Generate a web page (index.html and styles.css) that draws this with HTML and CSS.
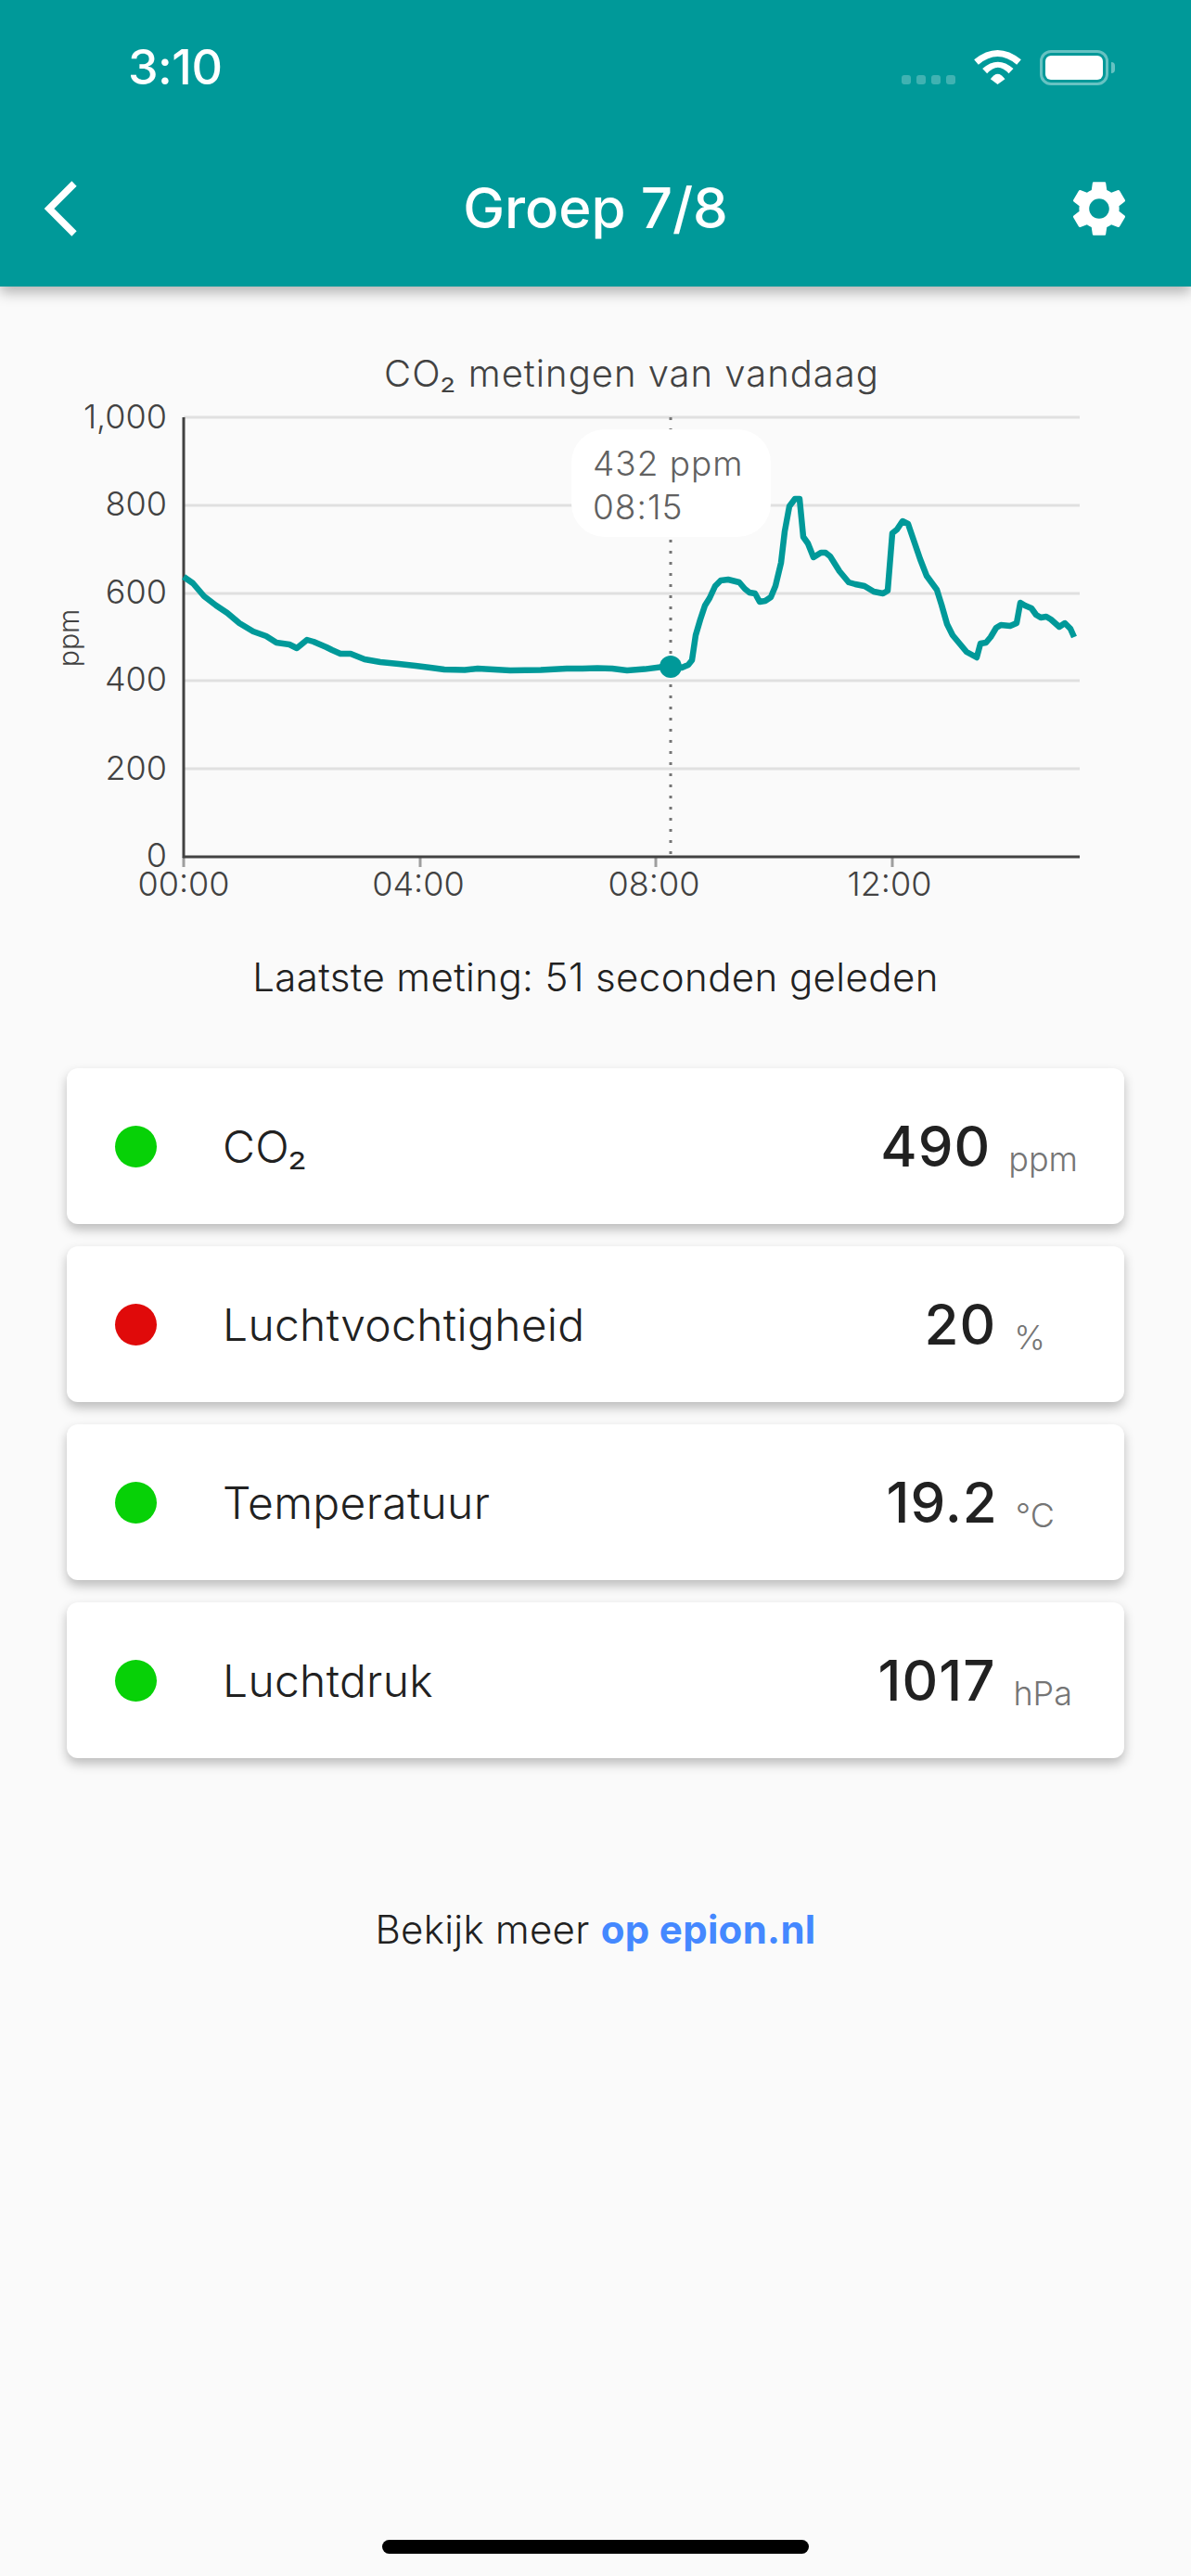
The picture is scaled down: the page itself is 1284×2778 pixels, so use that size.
FILE: index.html
```html
<!DOCTYPE html>
<html lang="nl">
<head>
  <meta charset="UTF-8">
  <meta name="viewport" content="width=device-width, initial-scale=1.0">
  <title>Groep 7/8</title>
  <link rel="stylesheet" href="styles.css">
</head>
<body>
  <div class="page">
    <header class="appbar">
      <div class="statusbar">
        <span class="time">3:10</span>
        <div class="status-icons">
          <div class="signal"><i></i><i></i><i></i><i></i></div>
          <svg class="wifi" viewBox="0 0 152 111">
            <path d="M0 31Q76-31 152 31L138 47Q76-5 14 47Z"/>
            <path d="M27 60Q77 16 127 60L112 76Q77 36 42 76Z"/>
            <path d="M53 94Q76 60 100 94L76 111Z"/>
          </svg>
          <div class="battery">
            <div class="battery-body"><div class="battery-fill"></div></div>
            <div class="battery-nub"></div>
          </div>
        </div>
      </div>
      <nav class="navbar">
        <svg class="back" viewBox="0 0 40 64">
          <polyline points="35,5 8,32 35,59"/>
        </svg>
        <h1>Groep 7/8</h1>
        <svg class="gear" viewBox="0 0 24 24">
          <path d="M19.14 12.94c.04-.3.06-.61.06-.94 0-.32-.02-.64-.07-.94l2.03-1.58c.18-.14.23-.41.12-.61l-1.92-3.32c-.12-.22-.37-.29-.59-.22l-2.39.96c-.5-.38-1.03-.7-1.62-.94l-.36-2.54c-.04-.24-.24-.41-.48-.41h-3.84c-.24 0-.43.17-.47.41l-.36 2.54c-.59.24-1.13.57-1.62.94l-2.39-.96c-.22-.08-.47 0-.59.22L2.74 8.87c-.12.21-.08.47.12.61l2.03 1.58c-.05.3-.09.63-.09.94s.02.64.07.94l-2.03 1.58c-.18.14-.23.41-.12.61l1.92 3.32c.12.22.37.29.59.22l2.39-.96c.5.38 1.03.7 1.62.94l.36 2.54c.05.24.24.41.48.41h3.84c.24 0 .44-.17.47-.41l.36-2.54c.59-.24 1.13-.56 1.62-.94l2.39.96c.22.08.47 0 .59-.22l1.92-3.32c.12-.22.07-.47-.12-.61l-2.01-1.58zM12 15.6c-1.98 0-3.6-1.62-3.6-3.6s1.62-3.6 3.6-3.6 3.6 1.62 3.6 3.6-1.62 3.6-3.6 3.6z"/>
        </svg>
      </nav>
    </header>

    <main class="content">
      <div class="chart">
        <!-- viewBox uses page coordinates so the plot matches the measurements -->
        <svg class="chart-svg" viewBox="0 370 1284 610">
          <text class="chart-title" x="681" y="417">CO₂ metingen van vandaag</text>

          <g class="grid">
            <line x1="198" y1="450" x2="1164" y2="450"/>
            <line x1="198" y1="545" x2="1164" y2="545"/>
            <line x1="198" y1="640" x2="1164" y2="640"/>
            <line x1="198" y1="734" x2="1164" y2="734"/>
            <line x1="198" y1="829" x2="1164" y2="829"/>
          </g>

          <g class="ticks">
            <line x1="198" y1="924" x2="198" y2="935"/>
            <line x1="453" y1="924" x2="453" y2="935"/>
            <line x1="707" y1="924" x2="707" y2="935"/>
            <line x1="962" y1="924" x2="962" y2="935"/>
          </g>

          <g class="y-labels">
            <text x="180" y="462">1,000</text>
            <text x="180" y="556">800</text>
            <text x="180" y="651">600</text>
            <text x="180" y="745">400</text>
            <text x="180" y="841">200</text>
            <text x="180" y="935">0</text>
          </g>

          <g class="x-labels">
            <text x="198" y="966">00:00</text>
            <text x="451" y="966">04:00</text>
            <text x="705" y="966">08:00</text>
            <text x="959" y="966">12:00</text>
          </g>

          <text class="axis-title" transform="translate(85 688) rotate(-90)">ppm</text>

          <line class="axis" x1="198" y1="450" x2="198" y2="925"/>
          <line class="axis" x1="197" y1="924" x2="1164" y2="924"/>

          <line class="cursor" x1="723" y1="450" x2="723" y2="924"/>

          <polyline class="line" points="198,622 208,629 220,643 233,653 245,661 258,672 273,681 287,686 298,693 312,695 320,699 331,690 338,692 352,698 358,701 367,705 378,705 393,711 410,714 430,716 448,718 464,720 479,722 501,722.5 515,721 550,723 583,722.5 611,721 628,721 644,720.5 660,721 676,723 695,721.6 723,718 735,720 742,717 746,712 750,685 755,668 760,653 765,645 771,632 777,626 785,625 797,628 803,635 808,639 814,640 819,649 825,648 831,644 836,632 842,607 846,573 851,546 857,538 862,538 866,579 871,586 877,601 885,596 890,596 895,600 905,616 915,628 922,630 932,632 942,638 952,640 957,637 962,575 967,571 973,562 979,565 992,603 999,621 1010,636 1015,652 1021,673 1027,685 1042,703 1053,709 1057,694 1063,693 1068,687 1074,677 1079,674 1089,675 1096,672 1100,650 1105,653 1112,656 1117,663 1122,666 1128,665 1133,668 1142,676 1148,672 1154,678 1158,687"/>
          <circle class="marker" cx="723" cy="719" r="12"/>
        </svg>

        <div class="tooltip">432 ppm<br>08:15</div>
      </div>

      <p class="last-reading">Laatste meting: 51 seconden geleden</p>

      <div class="cards">
        <div class="card">
          <span class="dot dot-ok"></span>
          <span class="card-label">CO₂</span>
          <span class="card-value">490</span>
          <span class="card-unit">ppm</span>
        </div>
        <div class="card">
          <span class="dot dot-bad"></span>
          <span class="card-label">Luchtvochtigheid</span>
          <span class="card-value">20</span>
          <span class="card-unit unit-percent">%</span>
        </div>
        <div class="card">
          <span class="dot dot-ok"></span>
          <span class="card-label">Temperatuur</span>
          <span class="card-value">19.2</span>
          <span class="card-unit unit-celsius">°C</span>
        </div>
        <div class="card">
          <span class="dot dot-ok"></span>
          <span class="card-label">Luchtdruk</span>
          <span class="card-value">1017</span>
          <span class="card-unit unit-hpa">hPa</span>
        </div>
      </div>

      <p class="more">Bekijk meer <a href="#">op epion.nl</a></p>

      <div class="home-indicator"></div>
    </main>
  </div>
</body>
</html>
```

FILE: styles.css
```css
* {
  box-sizing: border-box;
}
body {
  margin: 0;
  font-family: Inter, "Noto Sans", sans-serif;
  background: #fafafa;
  color: #212121;
}
.page {
  width: 1284px;
  height: 2778px;
  display: flex;
  flex-direction: column;
  overflow: hidden;
}

/* top bar */
.appbar {
  height: 309px;
  background: #009999;
  color: #fff;
  box-shadow: 0 6px 14px rgba(0,0,0,0.3);
  position: relative;
}
.statusbar {
  height: 132px;
  padding: 0 82px 41px 138px;
  display: flex;
  justify-content: space-between;
  align-items: flex-end;
}
.time {
  font-size: 52px;
  font-weight: 500;
  line-height: 1;
  margin-bottom: -8px;
  letter-spacing: -0.5px;
}
.status-icons {
  display: flex;
  align-items: flex-end;
  gap: 20px;
}
.signal {
  display: flex;
  gap: 6px;
}
.signal i {
  width: 10px;
  height: 10px;
  border-radius: 3px;
  background: rgba(255,255,255,0.25);
}
.wifi {
  width: 51px;
  height: 37px;
  fill: #fff;
  display: block;
}
.battery {
  display: flex;
  align-items: center;
  gap: 3px;
  margin-bottom: -1px;
}
.battery-body {
  width: 74px;
  height: 38px;
  padding: 3px;
  border: 3px solid rgba(255,255,255,0.4);
  border-radius: 12px;
}
.battery-fill {
  height: 100%;
  background: #fff;
  border-radius: 6px;
}
.battery-nub {
  width: 4px;
  height: 12px;
  background: rgba(255,255,255,0.4);
  border-radius: 0 4px 4px 0;
}
.navbar {
  height: 177px;
  padding: 0 44px;
  display: grid;
  grid-template-columns: 1fr auto 1fr;
  align-items: start;
}
.navbar h1 {
  margin: 56px 0 0;
  font-size: 60px;
  font-weight: 500;
  line-height: 72px;
}
.back {
  width: 40px;
  height: 64px;
  margin: 61px 0 0 1px;
  fill: none;
  stroke: #fff;
  stroke-width: 7.5;
}
.gear {
  width: 72px;
  height: 72px;
  margin: 57px 19px 0 0;
  justify-self: end;
  fill: #fff;
}

/* chart */
.content {
  flex: 1;
  display: flex;
  flex-direction: column;
  padding-top: 61px;
}
.chart {
  position: relative;
  height: 610px;
}
.chart-svg {
  display: block;
  width: 1284px;
  height: 610px;
  font-family: Inter, "Noto Sans", sans-serif;
}
.chart-title {
  font-size: 40px;
  font-weight: 350;
  letter-spacing: 1px;
  fill: #424242;
  text-anchor: middle;
}
.grid line {
  stroke: #e0e0e0;
  stroke-width: 3;
}
.ticks line {
  stroke: #9e9e9e;
  stroke-width: 3;
}
.axis {
  stroke: #424242;
  stroke-width: 3;
}
.y-labels text {
  font-size: 36px;
  font-weight: 350;
  fill: #424242;
  text-anchor: end;
}
.x-labels text {
  font-size: 36px;
  font-weight: 350;
  fill: #424242;
  text-anchor: middle;
}
.axis-title {
  font-size: 30px;
  font-weight: 350;
  fill: #424242;
  text-anchor: middle;
}
.cursor {
  stroke: #757575;
  stroke-width: 3;
  stroke-dasharray: 3 9;
}
.line {
  fill: none;
  stroke: #009999;
  stroke-width: 6.5;
  stroke-linejoin: round;
}
.marker {
  fill: #009999;
}
.tooltip {
  position: absolute;
  left: 616px;
  top: 93px;
  width: 215px;
  height: 116px;
  padding: 13px 0 0 23px;
  background: #fff;
  border-radius: 36px;
  font-size: 37px;
  font-weight: 350;
  letter-spacing: 1px;
  line-height: 47px;
  color: #616161;
}

/* readings */
.last-reading {
  margin: 50px 0 0;
  font-size: 42px;
  font-weight: 350;
  letter-spacing: 0.4px;
  line-height: 48px;
  text-align: center;
  color: #212121;
}
.cards {
  margin: 74px 72px 0;
  display: flex;
  flex-direction: column;
  gap: 24px;
}
.card {
  height: 168px;
  padding: 0 50px 0 52px;
  display: flex;
  align-items: center;
  background: #fff;
  border-radius: 12px;
  box-shadow: 0 6px 12px rgba(0,0,0,0.25);
}
.dot {
  width: 45px;
  height: 45px;
  border-radius: 50%;
}
.dot-ok {
  background: #07d107;
}
.dot-bad {
  background: #e00a0a;
}
.card-label {
  flex: 1;
  margin-left: 71px;
  font-size: 48px;
  font-weight: 350;
  letter-spacing: 0.3px;
}
.card-value {
  font-size: 60px;
  font-weight: 500;
  letter-spacing: 1px;
  margin-right: 19px;
}
.card-unit {
  font-size: 36px;
  font-weight: 350;
  color: #757575;
  margin-top: 28px;
}
.unit-percent {
  margin-right: 35px;
}
.unit-celsius {
  margin-right: 25px;
}
.unit-hpa {
  margin-right: 6px;
}
.more {
  margin: 161px 0 0;
  font-size: 42px;
  font-weight: 350;
  letter-spacing: 0.3px;
  line-height: 48px;
  text-align: center;
}
.more a {
  color: #4488ff;
  font-weight: 700;
  text-decoration: none;
}
.home-indicator {
  width: 460px;
  height: 15px;
  margin: auto auto 24px;
  background: #000;
  border-radius: 8px;
}
```
